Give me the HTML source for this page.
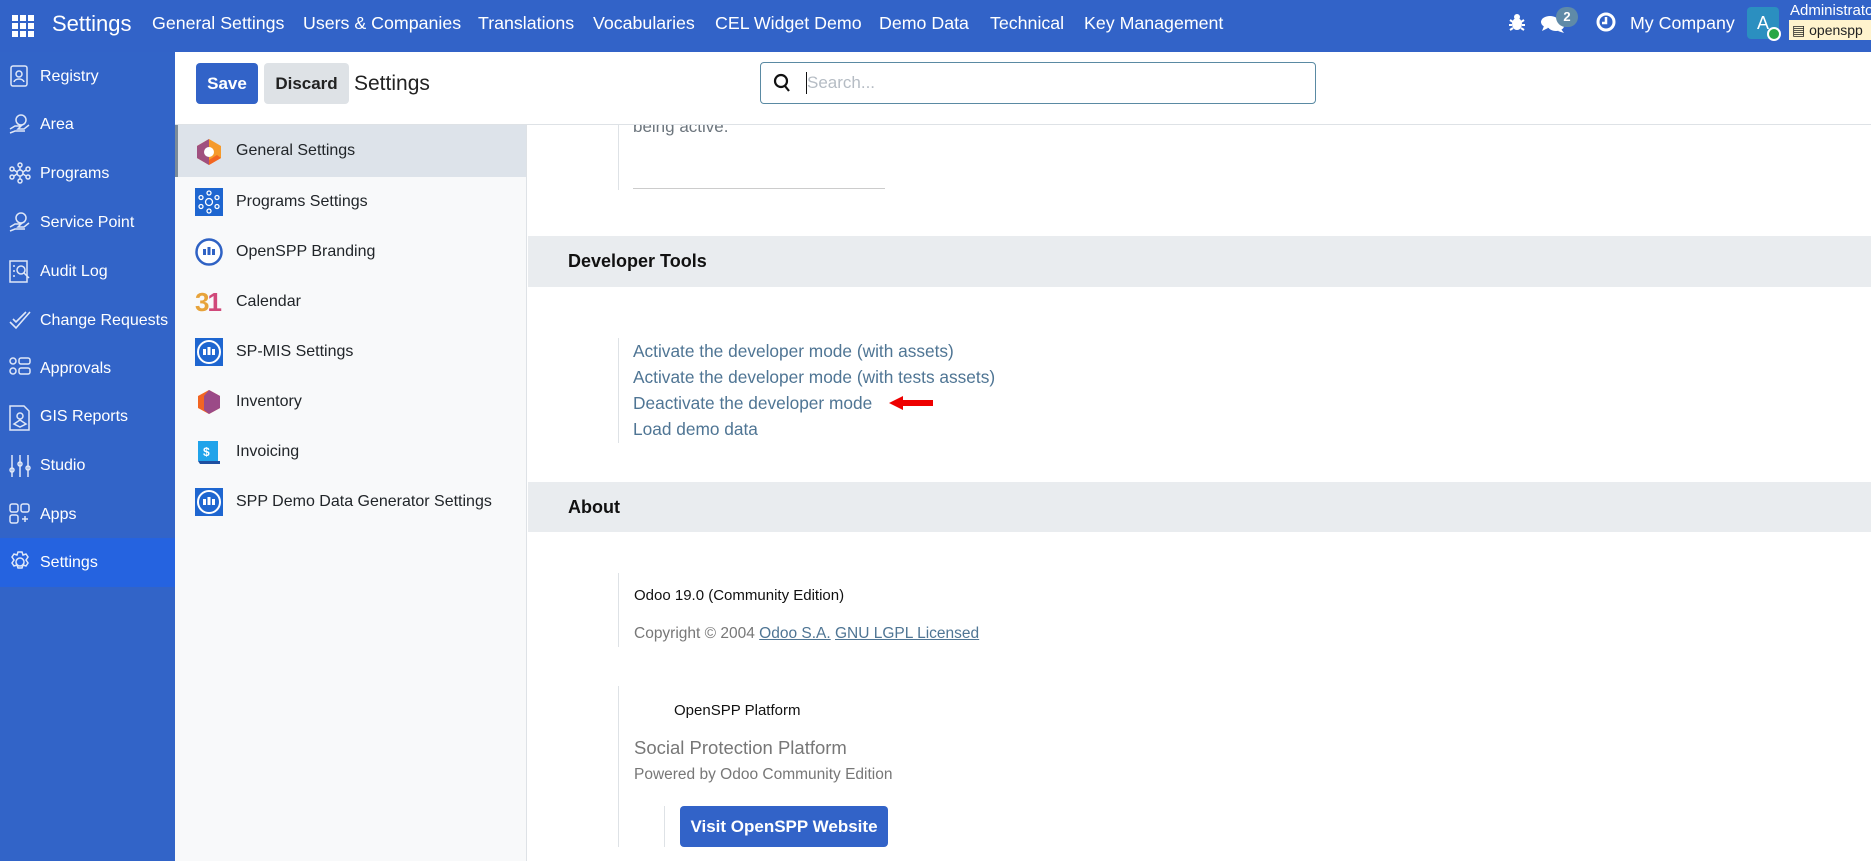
<!DOCTYPE html>
<html><head><meta charset="utf-8">
<style>
*{box-sizing:border-box;margin:0;padding:0}
body{width:1871px;height:861px;overflow:hidden;font-family:"Liberation Sans",sans-serif;background:#fff;position:relative}
.abs{position:absolute}
#top{left:0;top:0;width:1871px;height:52px;background:#3263c8;color:#fff}
#top .n{position:absolute;top:13px;font-size:17.8px;white-space:nowrap}
#side{left:0;top:52px;width:175px;height:809px;background:#3264c8;color:#fff}
.si{position:absolute;left:0;width:175px;height:49px;font-size:16px;padding-left:40px;line-height:49px}
.si svg{position:absolute;left:9px;top:13px}
#cp{left:175px;top:52px;width:1696px;height:73px;background:#fff;border-bottom:1px solid #dee2e6}
#lp{left:175px;top:125px;width:352px;height:736px;background:#f8f9fa;border-right:1px solid #dee2e6}
.li{position:absolute;left:0;width:351px;height:50px;font-size:16px;color:#212529;line-height:50px;padding-left:61px}
.li .ic{position:absolute;left:20px;top:11px;width:28px;height:28px}
.band{left:528px;width:1343px;background:#e9ecef;font-weight:bold;font-size:18px;color:#111;padding-left:40px}
.vl{position:absolute;width:1px;background:#dee2e6}
.lk{position:absolute;left:633px;font-size:17.3px;color:#4f7594;white-space:nowrap}
</style></head><body>
<div id="top" class="abs">
  <svg class="abs" style="left:12px;top:15px" width="22" height="22" viewBox="0 0 22 22" fill="#fff"><rect x="0" y="0" width="6" height="6"/><rect x="8" y="0" width="6" height="6"/><rect x="16" y="0" width="6" height="6"/><rect x="0" y="8" width="6" height="6"/><rect x="8" y="8" width="6" height="6"/><rect x="16" y="8" width="6" height="6"/><rect x="0" y="16" width="6" height="6"/><rect x="8" y="16" width="6" height="6"/><rect x="16" y="16" width="6" height="6"/></svg>
  <span class="n" style="left:52px;font-size:22px;top:11px">Settings</span>
  <span class="n" style="left:152px">General Settings</span>
  <span class="n" style="left:303px">Users &amp; Companies</span>
  <span class="n" style="left:478px">Translations</span>
  <span class="n" style="left:593px">Vocabularies</span>
  <span class="n" style="left:715px">CEL Widget Demo</span>
  <span class="n" style="left:879px">Demo Data</span>
  <span class="n" style="left:990px">Technical</span>
  <span class="n" style="left:1084px">Key Management</span>
  <svg class="abs" style="left:1509px;top:13px" width="16" height="18" viewBox="0 0 16 18" fill="#fff"><ellipse cx="8" cy="11" rx="5" ry="6"/><circle cx="8" cy="4" r="3"/><path d="M1 7l3 2M15 7l-3 2M0 12h3M16 12h-3M1 17l3-2M15 17l-3-2" stroke="#fff" stroke-width="2"/></svg>
  <svg class="abs" style="left:1541px;top:14px" width="24" height="20" viewBox="0 0 24 20" fill="#fff"><ellipse cx="9" cy="8" rx="9" ry="6"/><path d="M3 12l-2 5 6-3z"/><ellipse cx="15" cy="12" rx="8" ry="5"/><path d="M20 15l3 4-6-2z"/></svg>
  <div class="abs" style="left:1556px;top:7px;width:22px;height:20px;border-radius:10px;background:#5f8aa8;font-size:13px;text-align:center;line-height:20px;font-weight:bold">2</div>
  <svg class="abs" style="left:1596px;top:12px" width="20" height="20" viewBox="0 0 20 20"><circle cx="10" cy="10" r="8" fill="none" stroke="#fff" stroke-width="3"/><path d="M10 5v6H6" stroke="#fff" stroke-width="2.5" fill="none"/></svg>
  <span class="n" style="left:1630px">My Company</span>
  <div class="abs" style="left:1747px;top:7px;width:32px;height:32px;background:#2b8fc0;border-radius:4px;text-align:center;line-height:32px;font-size:18px">A</div>
  <div class="abs" style="left:1767px;top:27px;width:14px;height:14px;border-radius:7px;background:#28a745;border:2px solid #fff"></div>
  <span class="abs" style="left:1790px;top:2px;font-size:15px;white-space:nowrap">Administrato</span>
  <div class="abs" style="left:1789px;top:20px;width:82px;height:20px;background:#fff3cd;color:#222;font-size:14px;line-height:20px;padding-left:3px;white-space:nowrap">&#9636; openspp</div>
</div>
<div id="side" class="abs">
  <div class="si" style="top:0">Registry<svg width="20" height="22" viewBox="0 0 20 22" fill="none" stroke="#dfe7f7" stroke-width="1.5"><rect x="2" y="1" width="16" height="20" rx="2"/><circle cx="10" cy="9" r="3"/><path d="M5 17c1-4 9-4 10 0"/></svg></div>
  <div class="si" style="top:48px">Area<svg width="22" height="22" viewBox="0 0 22 22" fill="none" stroke="#dfe7f7" stroke-width="1.5"><circle cx="12" cy="7" r="5"/><path d="M1 16l5-3h6l-3 3h6l5-4M1 20l5-2h10"/></svg></div>
  <div class="si" style="top:97px">Programs<svg width="22" height="22" viewBox="0 0 22 22" fill="none" stroke="#dfe7f7" stroke-width="1.5"><circle cx="11" cy="11" r="3"/><circle cx="11" cy="3" r="2"/><circle cx="11" cy="19" r="2"/><circle cx="3" cy="7" r="2"/><circle cx="19" cy="7" r="2"/><circle cx="3" cy="15" r="2"/><circle cx="19" cy="15" r="2"/><path d="M11 5v3M11 14v3M5 8l3 2M17 8l-3 2M5 14l3-2M17 14l-3-2"/></svg></div>
  <div class="si" style="top:146px">Service Point<svg width="22" height="22" viewBox="0 0 22 22" fill="none" stroke="#dfe7f7" stroke-width="1.5"><circle cx="12" cy="7" r="5"/><path d="M1 16l5-3h6l-3 3h6l5-4M1 20l5-2h10"/></svg></div>
  <div class="si" style="top:195px">Audit Log<svg width="22" height="24" viewBox="0 0 22 24" fill="none" stroke="#dfe7f7" stroke-width="1.5"><rect x="1" y="1" width="17" height="21"/><circle cx="12" cy="10" r="4"/><path d="M15 13l5 5M4 6h2M4 11h2M4 16h2"/></svg></div>
  <div class="si" style="top:244px">Change Requests<svg width="22" height="22" viewBox="0 0 22 22" fill="none" stroke="#dfe7f7" stroke-width="1.6"><path d="M1 13l6 6L21 3M4 10l3 3 10-10"/></svg></div>
  <div class="si" style="top:292px">Approvals<svg width="22" height="20" viewBox="0 0 22 20" fill="none" stroke="#dfe7f7" stroke-width="1.5"><circle cx="4" cy="4" r="3"/><circle cx="4" cy="14" r="3"/><rect x="10" y="1" width="11" height="6" rx="2"/><rect x="10" y="11" width="11" height="6" rx="2"/></svg></div>
  <div class="si" style="top:340px">GIS Reports<svg width="22" height="26" viewBox="0 0 22 26" fill="none" stroke="#dfe7f7" stroke-width="1.5"><path d="M1 1h14l5 5v19H1z"/><circle cx="11" cy="11" r="3"/><path d="M5 19l6-4 6 4-6 3z"/></svg></div>
  <div class="si" style="top:389px">Studio<svg width="22" height="24" viewBox="0 0 22 24" fill="none" stroke="#dfe7f7" stroke-width="1.5"><path d="M3 1v22M11 1v22M19 1v22"/><circle cx="3" cy="16" r="2"/><circle cx="11" cy="10" r="2"/><circle cx="19" cy="14" r="2"/></svg></div>
  <div class="si" style="top:438px">Apps<svg width="22" height="22" viewBox="0 0 22 22" fill="none" stroke="#dfe7f7" stroke-width="1.5"><rect x="1" y="1" width="8" height="8" rx="2"/><rect x="12" y="1" width="8" height="8" rx="2"/><rect x="1" y="12" width="8" height="8" rx="2"/><path d="M16 13v6M13 16h6"/></svg></div>
  <div class="si" style="top:486px;background:#2563e0">Settings<svg width="22" height="22" viewBox="0 0 22 22" fill="none" stroke="#dfe7f7" stroke-width="1.5"><circle cx="11" cy="11" r="4"/><path d="M9 1h4l1 3 3-1 2 3-2 3 2 3-2 3-3-1-1 3H9l-1-3-3 1-2-3 2-3-2-3 2-3 3 1z"/></svg></div>
</div>
<div id="cp" class="abs">
  <div class="abs" style="left:21px;top:11px;width:62px;height:41px;background:#3263c8;border-radius:4px;color:#fff;font-weight:bold;font-size:17px;text-align:center;line-height:41px">Save</div>
  <div class="abs" style="left:89px;top:11px;width:85px;height:41px;background:#dee2e6;border-radius:4px;color:#222;font-weight:bold;font-size:17px;text-align:center;line-height:41px">Discard</div>
  <span class="abs" style="left:179px;top:20px;font-size:21px;color:#222">Settings</span>
  <div class="abs" style="left:585px;top:10px;width:556px;height:42px;border:1.5px solid #5a8aa3;border-radius:4px">
    <svg class="abs" style="left:12px;top:10px" width="18" height="20" viewBox="0 0 18 20" fill="none" stroke="#111" stroke-width="2.2"><circle cx="8" cy="8" r="6"/><path d="M12 13l4 5"/></svg>
    <div class="abs" style="left:45px;top:9px;width:1px;height:22px;background:#111"></div>
    <span class="abs" style="left:46px;top:10px;font-size:17px;color:#b5bcc4">Search...</span>
  </div>
</div>
<div id="lp" class="abs">
  <div class="li" style="top:0;height:52px;line-height:52px;background:#dde3ea;border-left:3px solid #7b8b99;padding-left:58px">General Settings<svg class="ic" style="left:17px;top:13px" viewBox="0 0 28 28"><path d="M14 1l12 7v12l-12 7-12-7V8z" fill="#f59a2b"/><path d="M14 1L2 8v12l12 7z" fill="#a0507f"/><path d="M14 27l12-7-4-3-8 5z" fill="#f26522"/><circle cx="14" cy="14" r="5" fill="#fff"/></svg></div>
  <div class="li" style="top:52px">Programs Settings<svg class="ic" viewBox="0 0 28 28"><rect width="28" height="28" fill="#1e66d0"/><g fill="none" stroke="#fff" stroke-width="1.3"><circle cx="14" cy="14" r="3.5"/><circle cx="14" cy="5" r="2"/><circle cx="14" cy="23" r="2"/><circle cx="6" cy="9.5" r="2"/><circle cx="22" cy="9.5" r="2"/><circle cx="6" cy="18.5" r="2"/><circle cx="22" cy="18.5" r="2"/></g></svg></div>
  <div class="li" style="top:102px">OpenSPP Branding<svg class="ic" viewBox="0 0 28 28"><circle cx="14" cy="14" r="12.5" fill="#fff" stroke="#2f62c4" stroke-width="2.5"/><g fill="#2f62c4"><rect x="8" y="11" width="3" height="6"/><rect x="12.5" y="9" width="3" height="8"/><rect x="17" y="11" width="3" height="6"/></g></svg></div>
  <div class="li" style="top:152px">Calendar<span class="ic" style="font-weight:bold;font-size:26px;line-height:28px;color:#e7a33a;letter-spacing:-2px">3<span style="color:#d0497a">1</span></span></div>
  <div class="li" style="top:202px">SP-MIS Settings<svg class="ic" viewBox="0 0 28 28"><rect width="28" height="28" fill="#1e66d0"/><circle cx="14" cy="14" r="11" fill="none" stroke="#fff" stroke-width="2"/><g fill="#fff"><rect x="8" y="11" width="3" height="6"/><rect x="12.5" y="9" width="3" height="8"/><rect x="17" y="11" width="3" height="6"/></g></svg></div>
  <div class="li" style="top:252px">Inventory<svg class="ic" viewBox="0 0 28 28"><path d="M14 2l11 6v12l-11 6-11-6V8z" fill="#f26522"/><path d="M14 2l11 6v12l-11 6-5-4V8z" fill="#9b4a87"/></svg></div>
  <div class="li" style="top:302px">Invoicing<svg class="ic" viewBox="0 0 28 28"><path d="M3 3h20v20H3z" fill="#20a3ea"/><path d="M3 23h22v3H5z" fill="#1e4fa0"/><text x="8" y="18" font-size="12" font-weight="bold" fill="#fff" font-family="Liberation Sans">$</text></svg></div>
  <div class="li" style="top:352px">SPP Demo Data Generator Settings<svg class="ic" viewBox="0 0 28 28"><rect width="28" height="28" fill="#1e66d0"/><circle cx="14" cy="14" r="11" fill="none" stroke="#fff" stroke-width="2"/><g fill="#fff"><rect x="8" y="11" width="3" height="6"/><rect x="12.5" y="9" width="3" height="8"/><rect x="17" y="11" width="3" height="6"/></g></svg></div>
</div>
<div class="abs" style="left:633px;top:125px;font-size:17px;color:#6c757d;height:14px;overflow:hidden"><div style="margin-top:-8px">being active.</div></div>
<div class="vl" style="left:618px;top:125px;height:65px"></div>
<div class="abs" style="left:633px;top:188px;width:252px;height:1px;background:#ccc"></div>
<div class="abs band" style="top:236px;height:51px;line-height:51px">Developer Tools</div>
<div class="vl" style="left:618px;top:338px;height:105px"></div>
<span class="lk" style="top:341px">Activate the developer mode (with assets)</span>
<span class="lk" style="top:367px">Activate the developer mode (with tests assets)</span>
<span class="lk" style="top:393px">Deactivate the developer mode</span>
<span class="lk" style="top:419px">Load demo data</span>
<svg class="abs" style="left:889px;top:396px" width="46" height="14" viewBox="0 0 46 14"><path d="M0 7l14-7v4h30v6H14v4z" fill="#e00"/></svg>
<div class="abs band" style="top:482px;height:50px;line-height:50px">About</div>
<div class="vl" style="left:618px;top:573px;height:74px"></div>
<span class="abs" style="left:634px;top:587px;font-size:15px;color:#111">Odoo 19.0 (Community Edition)</span>
<span class="abs" style="left:634px;top:625px;font-size:15.5px;color:#777">Copyright © 2004 <u style="color:#4f7594">Odoo S.A.</u> <u style="color:#4f7594">GNU LGPL Licensed</u></span>
<div class="vl" style="left:618px;top:686px;height:161px"></div>
<span class="abs" style="left:674px;top:702px;font-size:15px;color:#111">OpenSPP Platform</span>
<span class="abs" style="left:634px;top:737px;font-size:18.5px;color:#777">Social Protection Platform</span>
<span class="abs" style="left:634px;top:766px;font-size:15.5px;color:#777">Powered by Odoo Community Edition</span>
<div class="vl" style="left:664px;top:806px;height:41px"></div>
<div class="abs" style="left:680px;top:806px;width:208px;height:41px;background:#3263c8;border-radius:4px;color:#fff;font-weight:bold;font-size:17px;text-align:center;line-height:41px">Visit OpenSPP Website</div>
</body></html>
